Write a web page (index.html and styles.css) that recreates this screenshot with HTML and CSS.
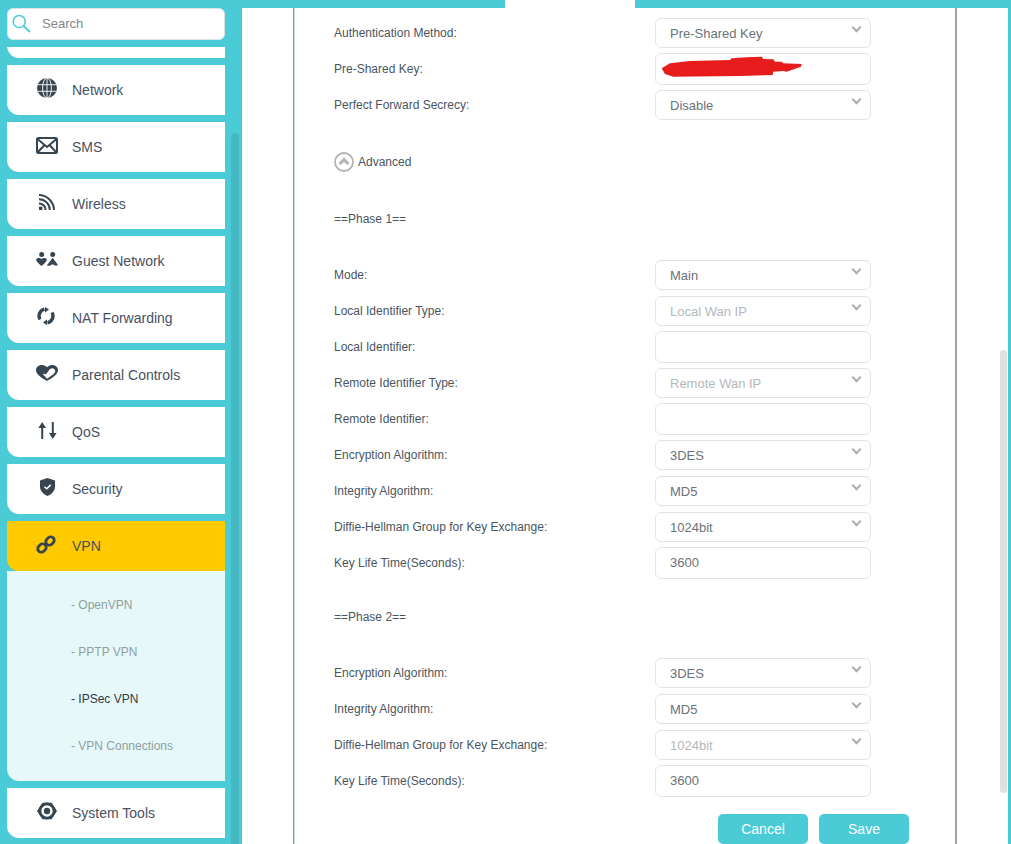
FILE: index.html
```html
<!DOCTYPE html>
<html lang="en">
<head>
<meta charset="utf-8">
<title>IPSec VPN</title>
<link rel="stylesheet" href="styles.css">
</head>
<body>
<div class="app">
  <aside class="sidebar">
    <div class="side-col">
      <div class="search">
        <svg class="search-icon" width="20" height="20" viewBox="0 0 20 20"><circle cx="7.200" cy="7.500" r="6" fill="none" stroke="#4acbd6" stroke-width="1.500"/><path d="M11.600 12 18 18" stroke="#4acbd6" stroke-width="1.800" fill="none"/></svg>
        <span>Search</span>
      </div>
      <div class="menu-clip">
        <nav class="menu">
          <a class="item"></a>
          <a class="item"><span class="ico"><svg width="20" height="20" viewBox="0 0 20 20"><circle cx="10" cy="10" r="10" fill="#36454f"/><g fill="none" stroke="#fff" stroke-width=".9"><ellipse cx="10" cy="10" rx="4.400" ry="10"/><path d="M10 0v20M.5 6.700h19M.5 13.300h19"/></g></svg></span>Network</a>
          <a class="item"><span class="ico"><svg width="22" height="17" viewBox="0 0 22 17"><rect x="1" y="1" width="20" height="15" rx="1.500" fill="none" stroke="#36454f" stroke-width="2"/><path d="M1.500 2 11 10l9.500-8M1.500 15.500l7-7.500M20.500 15.500l-7-7.500" fill="none" stroke="#36454f" stroke-width="2"/></svg></span>SMS</a>
          <a class="item"><span class="ico"><svg width="16" height="16" viewBox="0 0 16 16"><g fill="none" stroke="#36454f" stroke-width="2"><path d="M0 1C8 1 15 8 15 16"/><path d="M0 5.200C6 5.200 10.800 10 10.800 16"/><path d="M0 9.400C3.700 9.400 6.600 12.300 6.600 16"/></g><rect x="0" y="12.600" width="3.400" height="3.400" fill="#36454f"/></svg></span>Wireless</a>
          <a class="item"><span class="ico"><svg width="22" height="14" viewBox="0 0 22 14"><g fill="#36454f"><circle cx="5.700" cy="2.500" r="2.500"/><circle cx="16.700" cy="2.500" r="2.500"/><path d="M0 7.800C.8 5.500 4 5.300 5.500 7 7 5.300 10.200 5.500 11 7.800 10.500 9.600 8 12 5.500 14 3 12 .5 9.600 0 7.800Z"/><path d="M10.800 13.500 16.700 5.800 22 13c-1.600 1-3.800.6-5.300-1-1.600 1.700-4 2.300-5.900 1.500Z"/></g></svg></span>Guest Network</a>
          <a class="item"><span class="ico nudge"><svg width="18" height="18" viewBox="0 0 18 18"><g fill="none" stroke="#36454f" stroke-width="3.400"><path d="M3 12.500A7 7 0 0 1 7.500 2.200"/><path d="M15 5.500A7 7 0 0 1 10.500 15.800"/></g><path d="M8 0l4 2.500L8 5.500ZM10 12.500V18l-4-2.500Z" fill="#36454f"/></svg></span>NAT Forwarding</a>
          <a class="item"><span class="ico"><svg width="22" height="16" viewBox="0 0 22 16"><path d="M6 0C2.500 0 0 2.300 0 5 0 9.500 6 13 11 16c5-3 11-6.500 11-11 0-2.700-2.500-5-6-5-2 0-4 1-5 2.300C10 1 8 0 6 0Z" fill="#36454f"/><path d="M6.500 8.700 10 9.300 13 5.300C14.500 3.200 17 2.700 18.500 4.300 20 6 19 8 17 9.500L11 13.800Z" fill="#fff"/></svg></span>Parental Controls</a>
          <a class="item"><span class="ico"><svg width="19" height="17" viewBox="0 0 19 17"><g fill="#36454f"><path d="M3.200 4h2v13h-2Z"/><path d="M4.200 0 8 6H.4Z"/><path d="M13.800 0h2v13h-2Z"/><path d="M14.800 17 11 11h7.600Z"/></g></svg></span>QoS</a>
          <a class="item"><span class="ico"><svg width="15" height="18" viewBox="0 0 15 18"><path d="M7.500 0 15 2.500V8.500C15 13 11.500 16.300 7.500 18 3.500 16.300 0 13 0 8.500V2.500Z" fill="#36454f"/><path d="M4.400 8.800 6.700 10.800 10.700 6.900" fill="none" stroke="#fff" stroke-width="1.500"/></svg></span>Security</a>
          <a class="item active"><span class="ico nudge"><svg width="20" height="19" viewBox="0 0 20 19"><g fill="none" stroke="#36454f" stroke-width="2.800"><rect x="1.500" y="9.500" width="9" height="7" rx="3.500" transform="rotate(-45 6 13)"/><rect x="9.500" y="2.500" width="9" height="7" rx="3.500" transform="rotate(-45 14 6)"/></g></svg></span>VPN</a>
          <div class="submenu">
            <a class="sub">- OpenVPN</a>
            <a class="sub">- PPTP VPN</a>
            <a class="sub current">- IPSec VPN</a>
            <a class="sub">- VPN Connections</a>
          </div>
          <a class="item"><span class="ico"><svg width="20" height="18" viewBox="0 0 20 18"><path d="M5.500 .8h9L20 9l-5.500 8.200h-9L0 9Z" fill="#36454f"/><circle cx="10" cy="9" r="8.400" fill="#36454f"/><circle cx="10" cy="9" r="5.700" fill="#fff"/><circle cx="10" cy="9" r="3.200" fill="#36454f"/></svg></span>System Tools</a>
        </nav>
      </div>
    </div>
    <div class="side-scroll"></div>
  </aside>

  <div class="main-wrap">
    <div class="top-bar"><div class="top-gap"></div></div>
    <main class="main">
      <div class="card">
        <div class="form">
          <div class="clipped-control"></div>
          <div class="row"><label>Authentication Method:</label><div class="select">Pre-Shared Key<i class="chev"></i></div></div>
          <div class="row"><label>Pre-Shared Key:</label><div class="input secret"><svg width="142" height="22" viewBox="60 168 426 66"><path d="M65 205 90 190 150 183 270 180 275 175 320 172 365 170 370 177 400 178 405 185 425 185 430 190 485 192 483 200 440 215 430 213 400 215 398 225 300 228 100 230 75 222Z" fill="#e81c1c"/></svg></div></div>
          <div class="row"><label>Perfect Forward Secrecy:</label><div class="select">Disable<i class="chev"></i></div></div>
          <div class="advanced"><svg width="20" height="20" viewBox="0 0 20 20"><circle cx="10" cy="10" r="9" fill="none" stroke="#b3b3b3" stroke-width="1.800"/><path d="M10 5.500 15.500 11 13.500 13 10 10 6.500 13 4.500 11Z" fill="#b3b3b3"/></svg><span>Advanced</span></div>
          <div class="phase first">==Phase 1==</div>
          <div class="row"><label>Mode:</label><div class="select">Main<i class="chev"></i></div></div>
          <div class="row"><label>Local Identifier Type:</label><div class="select off">Local Wan IP<i class="chev"></i></div></div>
          <div class="row"><label>Local Identifier:</label><div class="input"></div></div>
          <div class="row"><label>Remote Identifier Type:</label><div class="select off">Remote Wan IP<i class="chev"></i></div></div>
          <div class="row"><label>Remote Identifier:</label><div class="input"></div></div>
          <div class="row"><label>Encryption Algorithm:</label><div class="select">3DES<i class="chev"></i></div></div>
          <div class="row"><label>Integrity Algorithm:</label><div class="select">MD5<i class="chev"></i></div></div>
          <div class="row"><label>Diffie-Hellman Group for Key Exchange:</label><div class="select">1024bit<i class="chev"></i></div></div>
          <div class="row"><label>Key Life Time(Seconds):</label><div class="input">3600</div></div>
          <div class="phase second">==Phase 2==</div>
          <div class="row"><label>Encryption Algorithm:</label><div class="select">3DES<i class="chev"></i></div></div>
          <div class="row"><label>Integrity Algorithm:</label><div class="select">MD5<i class="chev"></i></div></div>
          <div class="row"><label>Diffie-Hellman Group for Key Exchange:</label><div class="select off">1024bit<i class="chev"></i></div></div>
          <div class="row"><label>Key Life Time(Seconds):</label><div class="input">3600</div></div>
          <div class="actions"><button class="btn">Cancel</button><button class="btn">Save</button></div>
        </div>
      </div>
      <div class="page-scroll"><div class="page-thumb"></div></div>
    </main>
  </div>
</div>
</body>
</html>
```
FILE: styles.css
```css
* { box-sizing: border-box; }
html, body { margin: 0; height: 100%; overflow: hidden; }
body { background: #4acbd6; font-family: "Liberation Sans", Arial, sans-serif; color: #4a5560; }
.app { display: flex; width: 1011px; height: 844px; overflow: hidden; }

.sidebar { flex: 0 0 242px; display: flex; padding-left: 7px; height: 844px; }
.side-col { flex: 0 0 218px; display: flex; flex-direction: column; gap: 7px; padding-top: 8px; height: 844px; }
.search { flex: 0 0 32px; background: #fff; border: 1px solid #d9e3e5; border-radius: 6px; display: flex; align-items: center; font-size: 13px; color: #80868b; position: relative; padding: 0 0 2px 34px; }
.search-icon { position: absolute; left: 4px; top: 5px; }
.menu-clip { flex: 1; overflow: hidden; }
.menu { display: flex; flex-direction: column; gap: 7px; margin-top: -39px; }
.item { flex: 0 0 50px; height: 50px; background: #fff; border-bottom-left-radius: 12px; display: flex; align-items: center; font-size: 14px; color: #47525e; position: relative; padding-left: 65px; }
.item.active { background: #ffcb00; margin-bottom: -7px; }
.ico { position: absolute; left: 29px; top: 11px; width: 22px; height: 24px; display: flex; align-items: center; justify-content: center; }
.ico.nudge { left: 28px; }
.submenu { flex: 0 0 210px; background: #e7f8f9; border-bottom-left-radius: 12px; display: flex; flex-direction: column; padding: 10px 0 12px 64px; }
.sub { flex: 0 0 47px; display: flex; align-items: center; font-size: 12px; color: #8e9fa3; }
.sub.current { color: #2f3b47; }
.side-scroll { flex: 0 0 8px; margin: 133px 0 0 6px; background: #45b7c2; border-radius: 4px 4px 0 0; }

.main-wrap { flex: 0 0 766px; display: flex; flex-direction: column; height: 844px; }
.top-bar { flex: 0 0 8px; padding-left: 263px; }
.top-gap { width: 130px; height: 8px; background: #fff; }
.main { flex: 1; background: #fff; display: flex; overflow: hidden; }
.card { flex: 0 0 664px; margin-left: 51px; border-left: 1px solid #9a9a9a; border-right: 1px solid #a3a3a3; box-shadow: inset 1px 0 #c3d4d6, inset -1px 0 #4acbd6; padding-left: 40px; height: 836px; }
.form { width: 537px; margin-top: -4px; }
.clipped-control { height: 14px; margin: 0 0 0 321px; width: 216px; }
.row { display: flex; height: 36px; align-items: flex-start; }
.row label { flex: 0 0 321px; font-size: 12px; line-height: 30px; color: #4a5560; }
.select, .input { flex: 0 0 216px; border: 1px solid #e5e5e5; border-radius: 6px; font-size: 13px; color: #6b7278; padding-left: 14px; background: #fff; position: relative; }
.select { height: 30px; line-height: 29px; }
.input { height: 32px; line-height: 30px; margin-top: -1px; }
.select.off { color: #b5b8bb; }
.chev { position: absolute; right: 10px; top: 5px; width: 7px; height: 7px; border-right: 2px solid #adadad; border-bottom: 2px solid #adadad; transform: rotate(45deg); }
.secret svg { position: absolute; left: 4px; top: 2px; }
.advanced { height: 60px; display: flex; align-items: center; gap: 4px; font-size: 12px; color: #4a5560; padding-top: 12px; }
.phase { font-size: 12px; color: #4a5560; }
.first { height: 74px; padding-top: 26px; line-height: 14px; }
.second { height: 74px; padding-top: 26px; line-height: 14px; }
.actions { display: flex; justify-content: flex-end; gap: 11px; margin-top: 12px; width: 575px; }
.btn { width: 90px; height: 30px; border: 0; border-radius: 5px; background: #4acbd6; color: #fff; font: 14px "Liberation Sans", Arial, sans-serif; padding: 0; }
.page-scroll { flex: 0 0 50px; padding-left: 43px; }
.page-thumb { width: 7px; height: 443px; margin-top: 342px; background: #e0e0e0; border-radius: 4px; }
```
